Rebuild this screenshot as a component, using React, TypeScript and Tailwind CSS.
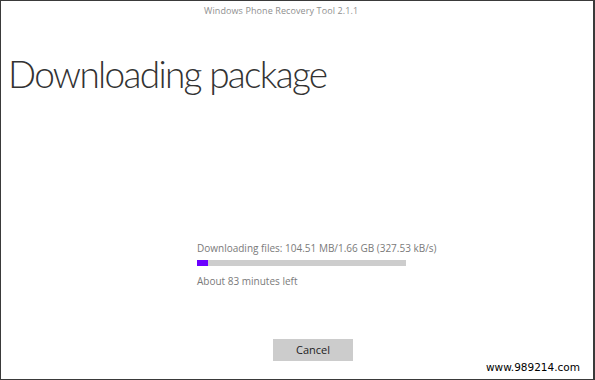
import React from 'react';

const FONT = { fontFamily: '"Open Sans", "Noto Sans", sans-serif' };

export default function App() {
  return (
    <div
      className="relative w-[595px] h-[380px] bg-white border-l border-t border-b border-r-2 border-[#3a3a3a] flex flex-col overflow-hidden"
      style={FONT}
    >
      {/* Title bar */}
      <div className="h-[20px] flex items-center pl-[203px] text-[9px] text-[#8f8f8f] tracking-[0.1px]">
        Windows Phone Recovery Tool 2.1.1
      </div>

      {/* Heading */}
      <h1
        className="mt-[31px] pl-[7px] text-[37px] leading-[44px] font-light text-[#333] tracking-[-1.7px]"
        style={{ fontFamily: 'Lato, "Open Sans", sans-serif' }}
      >
        Downloading package
      </h1>

      {/* Progress */}
      <div className="mt-[145px] pl-[196px] flex flex-col">
        <p className="text-[10px] leading-[14px] text-[#7a7a7a]">
          Downloading files: 104.51 MB/1.66 GB (327.53 kB/s)
        </p>
        <div className="mt-[5px] w-[209px] h-[6px] bg-[#cdcdcd] flex">
          <div className="w-[11px] h-full bg-[#6a00ff]" />
        </div>
        <p className="mt-[8px] text-[10px] leading-[14px] text-[#7a7a7a]">About 83 minutes left</p>
      </div>

      {/* Button */}
      <div className="mt-[51px] pl-[272px]">
        <button className="w-[80px] h-[22px] bg-[#cccccc] text-[11px] text-[#222] flex items-center justify-center">
          Cancel
        </button>
      </div>

      {/* Watermark */}
      <div
        className="absolute right-[13px] bottom-[3px] text-[10.5px] text-black"
        style={{ fontFamily: '"DejaVu Sans", sans-serif' }}
      >
        www.989214.com
      </div>
    </div>
  );
}
